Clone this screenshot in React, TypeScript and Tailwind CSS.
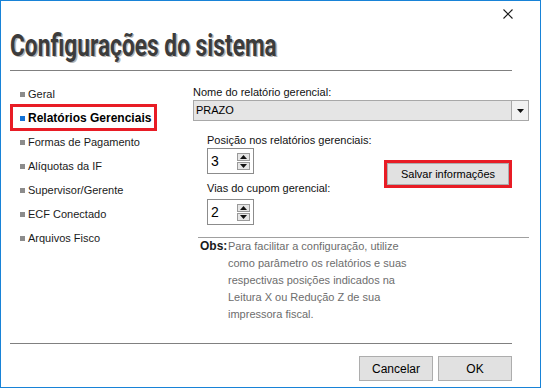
import React from "react";

const navItems = [
  "Geral",
  "Relatórios Gerenciais",
  "Formas de Pagamento",
  "Alíquotas da IF",
  "Supervisor/Gerente",
  "ECF Conectado",
  "Arquivos Fisco",
];

function SpinButtons() {
  return (
    <div className="flex flex-col gap-[1px] mr-[3px]">
      <div className="w-[13px] h-[8px] border border-[#9a9a9a] bg-[#e6e6e6] flex items-center justify-center">
        <svg width="7" height="4" viewBox="0 0 7 4">
          <path d="M0 4 L3.5 0 L7 4 Z" fill="#111" />
        </svg>
      </div>
      <div className="w-[13px] h-[8px] border border-[#9a9a9a] bg-[#e6e6e6] flex items-center justify-center">
        <svg width="7" height="4" viewBox="0 0 7 4">
          <path d="M0 0 L7 0 L3.5 4 Z" fill="#111" />
        </svg>
      </div>
    </div>
  );
}

function SpinBox({ value }: { value: string }) {
  return (
    <div className="w-[47px] h-[26px] border border-[#8c8c8c] bg-white flex items-center justify-between">
      <span className="pl-[3px] text-[14px] leading-none text-black">{value}</span>
      <SpinButtons />
    </div>
  );
}

export default function App() {
  return (
    <div className="w-[541px] h-[388px] border border-[#1883d7] bg-white flex flex-col font-['Liberation_Sans',Arial,sans-serif] text-[11px] text-black overflow-hidden">
      {/* header */}
      <div className="h-[69px] flex flex-col">
        <div className="flex justify-end pt-[8px] pr-[27px]">
          <svg width="10" height="10" viewBox="0 0 10 10">
            <path d="M0.5 0.5 L9.5 9.5 M9.5 0.5 L0.5 9.5" stroke="#1a1a1a" strokeWidth="1.1" />
          </svg>
        </div>
        <div className="mt-[10px] ml-[9px] h-[32px]">
          <span className="inline-block origin-left scale-x-[0.71] font-['Roboto',sans-serif] font-bold text-[32px] leading-[32px] text-[#3c3c3c] whitespace-nowrap [text-shadow:2px_1px_0_#b4b4b4]">
            Configurações do sistema
          </span>
        </div>
      </div>
      <div className="h-px bg-[#808080] ml-[9px] mr-[28px]" />

      {/* body */}
      <div className="h-[272px] flex">
        <nav className="w-[192px] pt-[11px] flex flex-col">
          {navItems.map((item, i) => {
            const selected = i === 1;
            return (
              <div key={item} className="relative h-[24px] flex items-center">
                {selected && (
                  <span className="absolute left-[9px] top-[-2px] w-[147px] h-[27px] border-[3px] border-[#e81c25]" />
                )}
                <span
                  className={
                    selected
                      ? "ml-[19px] w-[5px] h-[5px] bg-[#1372d6]"
                      : "ml-[19px] w-[5px] h-[5px] bg-[#8c8c8c]"
                  }
                />
                <span
                  className={
                    selected
                      ? "ml-[3px] font-bold text-[12px] text-black"
                      : "ml-[3px] text-[11px] text-[#1a1a1a]"
                  }
                >
                  {item}
                </span>
              </div>
            );
          })}
        </nav>

        <div className="flex-1 mr-[11px] pt-[14px] flex flex-col">
          <div className="leading-[14px] text-[#111]">Nome do relatório gerencial:</div>
          <div className="mt-[1px] h-[21px] border border-[#a8a8a8] bg-[#e5e5e5] flex items-center">
            <span className="flex-1 pl-[2px] text-[11px] text-black">PRAZO</span>
            <div className="w-[17px] h-full border-l border-[#a8a8a8] bg-[#f2f2f2] flex items-center justify-center">
              <svg width="7" height="4" viewBox="0 0 7 4">
                <path d="M0 0 L7 0 L3.5 4 Z" fill="#111" />
              </svg>
            </div>
          </div>

          <div className="flex">
            <div className="ml-[14px] flex flex-col">
              <div className="mt-[12px] leading-[14px] text-[#111]">Posição nos relatórios gerenciais:</div>
              <div className="mt-[1px]">
                <SpinBox value="3" />
              </div>
              <div className="mt-[7px] leading-[14px] text-[#111]">Vias do cupom gerencial:</div>
              <div className="mt-[4px]">
                <SpinBox value="2" />
              </div>
            </div>
            <div className="ml-auto mr-[17px] mt-[39px]">
              <div className="border-[3px] border-[#e81c25]">
                <div className="w-[122px] h-[22px] border border-[#adadad] bg-[#e1e1e1] flex items-center justify-center text-[11px] text-black">
                  Salvar informações
                </div>
              </div>
            </div>
          </div>

          <div className="mt-[12px] ml-[5px] h-px bg-[#a0a0a0]" />

          <div className="ml-[7px] flex leading-[17px]">
            <span className="font-bold text-[12px] text-[#1a1a1a] w-[28px]">Obs:</span>
            <p className="text-[11px] text-[#6d6d6d]">
              Para facilitar a configuração, utilize
              <br />
              como parâmetro os relatórios e suas
              <br />
              respectivas posições indicados na
              <br />
              Leitura X ou Redução Z de sua
              <br />
              impressora fiscal.
            </p>
          </div>
        </div>
      </div>

      <div className="h-px bg-[#808080] ml-[9px] mr-[28px]" />

      {/* footer */}
      <div className="pt-[12px] pr-[28px] flex justify-end gap-[5px]">
        <button className="w-[74px] h-[25px] border border-[#adadad] bg-[#e1e1e1] text-[12px] text-black">
          Cancelar
        </button>
        <button className="w-[74px] h-[25px] border border-[#adadad] bg-[#e1e1e1] text-[12px] text-black">
          OK
        </button>
      </div>
    </div>
  );
}
